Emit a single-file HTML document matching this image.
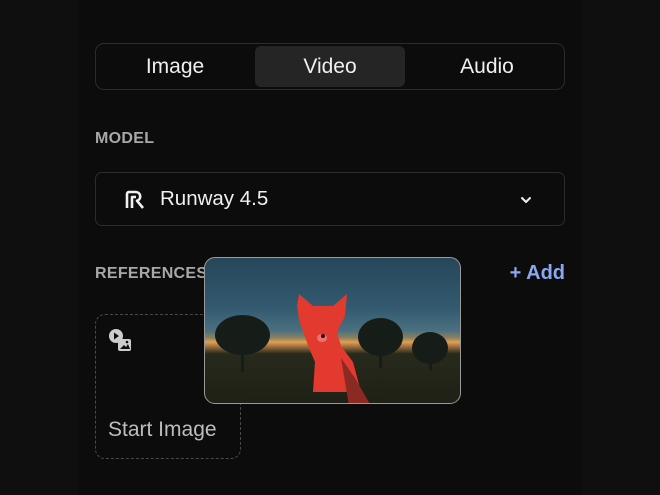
<!DOCTYPE html>
<html><head><style>
*{margin:0;padding:0;box-sizing:border-box}
body{width:660px;height:495px;background:#0f0f0f;font-family:"Liberation Sans",sans-serif;position:relative;overflow:hidden}
.panel{position:absolute;left:78px;top:0;width:504px;height:495px;background:#0c0c0c}
.seg{position:absolute;left:95px;top:43px;width:470px;height:47px;border:1px solid #2c2c2c;border-radius:9px}
.seg div{position:absolute;top:0;height:45px;line-height:46px;color:#f0f0f0;font-size:21px;text-align:center}
.lbl{position:absolute;color:#a8a8a8;font-size:16px;font-weight:bold;letter-spacing:.3px}
.sel{position:absolute;left:95px;top:172px;width:470px;height:54px;border:1px solid #2c2c2c;border-radius:7px}
.drop{position:absolute;left:95px;top:314px;width:146px;height:145px;border:1.5px dashed #4a4a4a;border-radius:10px}
.pic{position:absolute;left:204px;top:257px;width:257px;height:147px;border:1.5px solid #9a9a9a;border-radius:11px;overflow:hidden;
background:linear-gradient(180deg,#27465a 0%,#335a70 35%,#4a7080 50%,#8a8060 55%,#e0a050 58%,#a07040 61%,#272a1c 66%,#1f2016 100%)}
.tree{position:absolute;background:#161c18;border-radius:50%}
.trunk{position:absolute;background:#161c18;width:3px}
</style></head><body>
<div class="panel"></div>
<div class="seg">
 <div style="left:0;width:158px">Image</div>
 <div style="left:159px;top:2px;height:41px;line-height:42px;width:150px;background:#252525;border-radius:6px">Video</div>
 <div style="left:312px;width:158px">Audio</div>
</div>
<div class="lbl" style="left:95px;top:130px">MODEL</div>
<div class="sel">
 <svg style="position:absolute;left:28px;top:16px" width="22" height="22" viewBox="0 0 22 22" fill="none" stroke="#f0f0f0" stroke-width="2.6" stroke-linejoin="round"><path d="M3 19V5a2 2 0 0 1 2-2h7a4.5 4.5 0 0 1 1 8.8L19 19M8 19V8h4"/></svg>
 <div style="position:absolute;left:64px;top:14px;color:#f0f0f0;font-size:20.5px">Runway 4.5</div>
 <svg style="position:absolute;left:423px;top:20px" width="14" height="14" viewBox="0 0 14 14" fill="none" stroke="#f0f0f0" stroke-width="2" stroke-linecap="round" stroke-linejoin="round"><path d="M3 5l4 4 4-4"/></svg>
</div>
<div class="lbl" style="left:95px;top:265px">REFERENCES</div>
<div style="position:absolute;right:95px;top:262px;color:#8aa8f0;font-size:20px;font-weight:bold">+ Add</div>
<div class="drop">
 <svg style="position:absolute;left:12px;top:13px" width="26" height="26" viewBox="0 0 26 26"><circle cx="8" cy="8" r="7" fill="#ccc"/><path d="M6 4.5v7l5-3.5z" fill="#0c0c0c"/><rect x="10" y="11" width="13" height="12" rx="2" fill="#ccc"/><path d="M12 21l4-4 2 2 2-3 2 5z" fill="#0c0c0c"/><circle cx="19" cy="14" r="1.3" fill="#0c0c0c"/></svg>
 <div style="position:absolute;left:12px;top:103px;color:#bdbdbd;font-size:21px">Start Image</div>
</div>
<div class="pic">
 <div class="tree" style="left:10px;top:57px;width:55px;height:40px"></div><div class="trunk" style="left:36px;top:92px;height:22px"></div>
 <div class="tree" style="left:153px;top:60px;width:45px;height:38px"></div><div class="trunk" style="left:174px;top:95px;height:15px"></div>
 <div class="tree" style="left:207px;top:74px;width:36px;height:32px"></div><div class="trunk" style="left:224px;top:100px;height:12px"></div>
 <svg style="position:absolute;left:90px;top:36px" width="110" height="112" viewBox="0 0 110 112"><path d="M4 0l14 12h20l14-12-2 22-8 16 4 14 12 16 8 30H18l2-30-6-14L4 26 2 12z" fill="#e33a30"/><path d="M46 64l14 20 16 28H54z" fill="#8a2a22"/><ellipse cx="27" cy="44" rx="5" ry="4" fill="#f07070"/><circle cx="28" cy="42" r="2" fill="#2a0e0c"/></svg>
</div>
</body></html>
